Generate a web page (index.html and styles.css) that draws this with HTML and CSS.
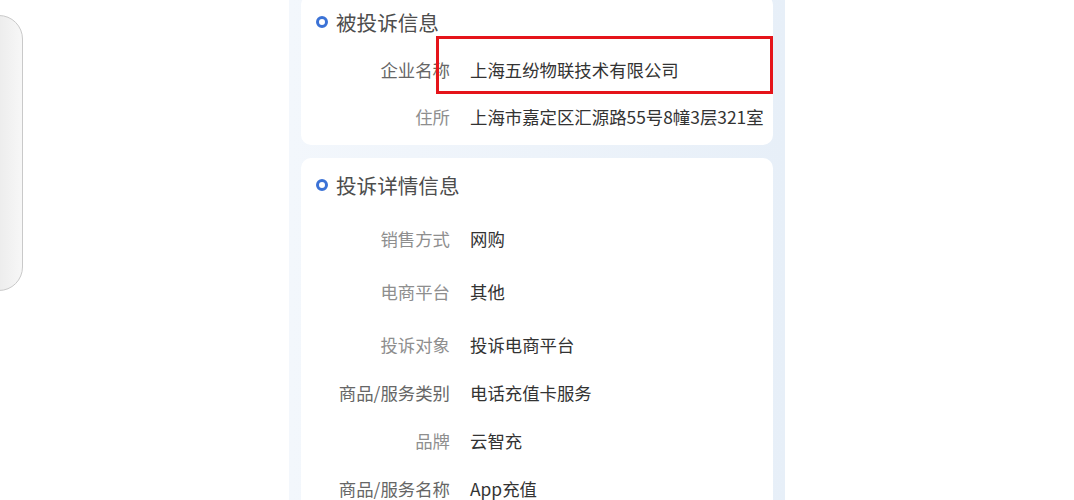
FILE: index.html
```html
<!DOCTYPE html>
<html lang="zh-CN">
<head>
<meta charset="utf-8">
<title>投诉详情</title>
<link rel="stylesheet" href="styles.css">
</head>
<body>
<div class="stage">
  <div class="side-left">
    <div class="side-pill"></div>
  </div>
  <main class="phone">
    <section class="card card-first">
      <h2 class="card-title"><span class="ring"></span>被投诉信息</h2>
      <div class="rows rows-first">
        <div class="row"><span class="label label-dark">企业名称</span><span class="value">上海五纷物联技术有限公司</span></div>
        <div class="row"><span class="label">住所</span><span class="value">上海市嘉定区汇源路55号8幢3层321室</span></div>
      </div>
      <div class="highlight"></div>
    </section>
    <section class="card card-detail">
      <h2 class="card-title"><span class="ring"></span>投诉详情信息</h2>
      <div class="rows rows-detail">
        <div class="row"><span class="label">销售方式</span><span class="value">网购</span></div>
        <div class="row row-loose"><span class="label">电商平台</span><span class="value">其他</span></div>
        <div class="row row-loose"><span class="label">投诉对象</span><span class="value">投诉电商平台</span></div>
        <div class="row"><span class="label label-dark">商品/服务类别</span><span class="value">电话充值卡服务</span></div>
        <div class="row"><span class="label">品牌</span><span class="value">云智充</span></div>
        <div class="row"><span class="label label-dark">商品/服务名称</span><span class="value">App充值</span></div>
      </div>
    </section>
  </main>
  <div class="side-right"></div>
</div>
</body>
</html>
```

FILE: styles.css
```css
* { box-sizing: border-box; }

html, body {
  margin: 0;
  padding: 0;
  background: #ffffff;
  overflow: hidden;
}

body {
  font-family: "Noto Sans CJK SC", "Noto Sans", sans-serif;
  width: 1074px;
  height: 500px;
}

.stage {
  display: grid;
  grid-template-columns: 289px 496px 1fr;
  height: 500px;
  overflow: hidden;
}

.side-left {
  overflow: hidden;
}

.side-pill {
  margin-top: 15px;
  margin-left: -40px;
  width: 63px;
  height: 276px;
  border: 1px solid #c9c9c9;
  border-radius: 24px;
  background: linear-gradient(to right, #f4f4f4, #ececec 60%, #f7f7f7);
}

.phone {
  background: linear-gradient(to right, #f3f7fc, #e7eff8);
  padding: 0 12px;
  display: flex;
  flex-direction: column;
  gap: 13px;
  margin-top: -5px;
  height: 560px;
}

.card {
  position: relative;
  background: #ffffff;
  border-radius: 10px;
  padding: 0 15px;
  flex: none;
}

.card-first {
  height: 150px;
}

.card-detail {
  height: 390px;
}

.card-title {
  margin: 0;
  padding-top: 12px;
  height: 42px;
  line-height: 30px;
  font-size: 20.6px;
  font-weight: 400;
  color: #4d4d4d;
  display: flex;
  align-items: center;
  gap: 8px;
}

.ring {
  width: 12px;
  height: 12px;
  border: 3px solid #3b72d6;
  border-radius: 50%;
  flex: none;
}

.rows-first { padding-top: 21px; }
.rows-detail { padding-top: 27px; }

.row {
  display: grid;
  grid-template-columns: 134px 1fr;
  column-gap: 20px;
  height: 24px;
  line-height: 24px;
  font-size: 17.4px;
}

.row + .row { margin-top: 23px; }
.rows-detail .row + .row { margin-top: 24px; }
.rows-detail .row.row-loose { margin-top: 29px; }

.label {
  text-align: right;
  color: #8e8e8e;
  white-space: nowrap;
}

.label-dark {
  color: #666666;
}

.value {
  color: #333333;
  white-space: nowrap;
}

.highlight {
  position: absolute;
  left: 135px;
  top: 41px;
  width: 337px;
  height: 58px;
  border: 3px solid #e5141a;
  pointer-events: none;
}
```
